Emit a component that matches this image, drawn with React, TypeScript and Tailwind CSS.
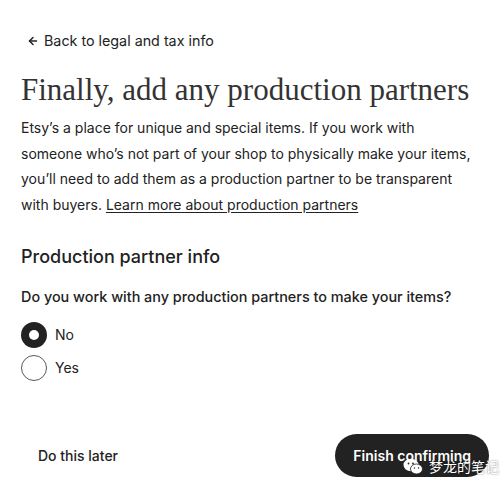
import { ArrowLeft } from 'lucide-react';

const body = '"Inter", "Liberation Sans", sans-serif';

function Radio({ label, checked }: { label: string; checked?: boolean }) {
  return (
    <label className="flex items-center gap-2 h-[33px]">
      {checked ? (
        <span className="w-[26px] h-[26px] rounded-full bg-[#222222] flex items-center justify-center">
          <span className="w-[10px] h-[10px] rounded-full bg-white" />
        </span>
      ) : (
        <span className="w-[26px] h-[26px] rounded-full border border-[#595959] bg-white" />
      )}
      <span className="text-[14px] text-[#222222]">{label}</span>
    </label>
  );
}

export default function App() {
  return (
    <div className="w-[503px] h-[489px] bg-white text-[#222222] overflow-hidden relative" style={{ fontFamily: body }}>
      <div className="pl-[21px] pr-3 pt-[32px]">
        <a className="flex items-center gap-[5px] pl-[6px] text-[14.3px] leading-[18px]">
          <ArrowLeft size={12} strokeWidth={3} />
          <span>Back to legal and tax info</span>
        </a>

        <h1
          className="mt-[20px] text-[31px] leading-[40px] text-[#333333] whitespace-nowrap"
          style={{ fontFamily: '"Liberation Serif", serif' }}
        >
          Finally, add any production partners
        </h1>

        <p className="mt-[5px] text-[14px] leading-[25.5px] text-[#222222]">
          Etsy’s a place for unique and special items. If you work with
          <br />
          someone who’s not part of your shop to physically make your items,
          <br />
          you’ll need to add them as a production partner to be transparent
          <br />
          with buyers. <span className="underline underline-offset-2">Learn more about production partners</span>
        </p>

        <h2 className="mt-[28px] text-[18px] leading-[24px] font-medium">Production partner info</h2>

        <p className="mt-[19px] text-[14.4px] leading-[18px] font-medium">
          Do you work with any production partners to make your items?
        </p>

        <div className="mt-[12px] flex flex-col">
          <Radio label="No" checked />
          <Radio label="Yes" />
        </div>
      </div>

      <div className="absolute left-0 right-0 top-[434px] flex items-center justify-between pl-[38px] pr-[14px]">
        <button className="text-[14px] font-medium">Do this later</button>
        <button className="h-[43px] px-[18px] rounded-full bg-[#222222] text-white text-[14px] font-semibold">
          Finish confirming
        </button>
      </div>

      <div className="absolute left-[403px] top-[456px] flex items-center gap-[6px] text-white text-[14px] [text-shadow:0_0_2px_rgba(0,0,0,0.6)]" style={{ fontFamily: '"Noto Sans CJK SC", sans-serif' }}>
        <svg width="20" height="17" viewBox="0 0 20 17">
          <ellipse cx="8" cy="7" rx="7.5" ry="6.2" fill="white" />
          <ellipse cx="13.5" cy="11" rx="6" ry="5" fill="white" stroke="#222" strokeWidth="0.8" />
          <circle cx="5.5" cy="5.5" r="0.9" fill="#222" />
          <circle cx="10" cy="5.5" r="0.9" fill="#222" />
          <circle cx="11.5" cy="10" r="0.7" fill="#222" />
          <circle cx="15.5" cy="10" r="0.7" fill="#222" />
        </svg>
        <span>梦龙的笔记</span>
      </div>
    </div>
  );
}
